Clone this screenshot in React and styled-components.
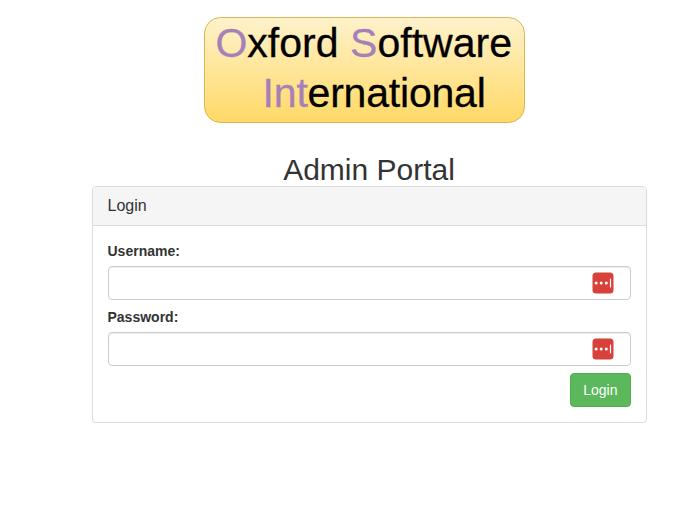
import React from "react";
import styled, { createGlobalStyle } from "styled-components";

const GlobalStyle = createGlobalStyle`
  *, *::before, *::after { box-sizing: border-box; }
  body {
    margin: 0;
    background: #fff;
    color: #333;
    font-family: "Liberation Sans", Arial, sans-serif;
    font-size: 14px;
    line-height: 20px;
  }
`;

const Page = styled.main`
  width: 555px;
  margin: 0 0 0 91.5px;
  padding-top: 16px;
  display: flex;
  flex-direction: column;
`;

const Logo = styled.svg`
  display: block;
  width: 322px;
  height: 108px;
  margin-left: 112.5px;
  font-family: "Liberation Sans", Arial, sans-serif;
`;

const Title = styled.h2`
  margin: 29px 0 0;
  text-align: center;
  font-size: 30px;
  font-weight: 500;
  line-height: 33px;
`;

const Panel = styled.section`
  border: 1px solid #ddd;
  border-radius: 4px;
  box-shadow: 0 1px 1px rgba(0, 0, 0, 0.05);
`;

const PanelHeading = styled.header`
  padding: 10px 15px;
  background: #f5f5f5;
  border-bottom: 1px solid #ddd;
  border-radius: 3px 3px 0 0;
`;

const PanelTitle = styled.h3`
  margin: 0;
  font-size: 16px;
  font-weight: 500;
  line-height: 18px;
`;

const Form = styled.form`
  display: flex;
  flex-direction: column;
  padding: 15px;
`;

const Field = styled.div`
  display: flex;
  flex-direction: column;
  margin-bottom: 7px;
`;

const Label = styled.label`
  margin-bottom: 5px;
  font-weight: 700;
`;

const InputBox = styled.div`
  display: flex;
  align-items: center;
  height: 34px;
  padding: 0 16px 0 12px;
  border: 1px solid #ccc;
  border-radius: 4px;
  box-shadow: inset 0 1px 1px rgba(0, 0, 0, 0.075);
`;

const Input = styled.input`
  flex: 1;
  border: 0;
  outline: 0;
  padding: 0;
  background: transparent;
  font: inherit;
`;

const Button = styled.button`
  align-self: flex-end;
  height: 34px;
  padding: 6px 12px;
  border: 1px solid #4cae4c;
  border-radius: 4px;
  background: #5cb85c;
  color: #fff;
  font: inherit;
`;

function PasswordManagerIcon() {
  return (
    <svg width="22" height="22" viewBox="0 0 22 22" aria-hidden="true">
      <rect x="0.5" y="0.5" width="21" height="21" rx="3.5" fill="#d8403a" />
      <circle cx="4.1" cy="11" r="1.5" fill="#fff" />
      <circle cx="9.2" cy="11" r="1.5" fill="#fff" />
      <circle cx="14.3" cy="11" r="1.5" fill="#fff" />
      <rect x="17.9" y="6.5" width="1.2" height="9" rx="0.4" fill="#fff" />
    </svg>
  );
}

function FormField({ id, label, type }) {
  return (
    <Field>
      <Label htmlFor={id}>{label}</Label>
      <InputBox>
        <Input id={id} type={type} />
        <PasswordManagerIcon />
      </InputBox>
    </Field>
  );
}

const Word = styled.text`
  font-size: 41px;
  fill: #000;
  stroke: #000;
  stroke-width: 0.3px;
`;

const Accent = styled.tspan`
  fill: #a680b8;
  stroke: #a680b8;
`;

export default function App() {
  return (
    <>
      <GlobalStyle />
      <Page>
        <Logo viewBox="0 0 322 108" role="img" aria-label="Oxford Software International">
          <defs>
            <linearGradient id="gold" x1="0" y1="0" x2="0" y2="1">
              <stop offset="0" stopColor="#fff2cc" />
              <stop offset="1" stopColor="#ffd966" />
            </linearGradient>
          </defs>
          <rect x="0.5" y="1.5" width="320" height="105" rx="16" fill="url(#gold)" stroke="#d6b656" />
          <Word x="11.4" y="41.2" textLength="296.6"><Accent>O</Accent>xford <Accent>S</Accent>oftware</Word>
          <Word x="58.6" y="91.2" textLength="223.2"><Accent>Int</Accent>ernational</Word>
        </Logo>
        <Title>Admin Portal</Title>
        <Panel>
          <PanelHeading><PanelTitle>Login</PanelTitle></PanelHeading>
          <Form onSubmit={(e) => e.preventDefault()}>
            <FormField id="username" label="Username:" type="text" />
            <FormField id="password" label="Password:" type="password" />
            <Button type="submit">Login</Button>
          </Form>
        </Panel>
      </Page>
    </>
  );
}
